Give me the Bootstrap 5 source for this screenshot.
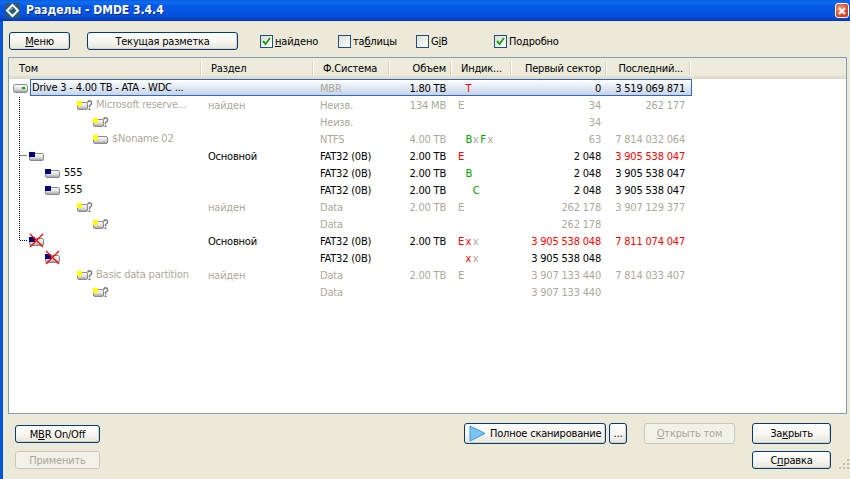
<!DOCTYPE html>
<html lang="ru">
<head>
<meta charset="utf-8">
<title>Разделы - DMDE 3.4.4</title>
<link rel="stylesheet" href="https://cdn.jsdelivr.net/npm/bootstrap@5.3.0/dist/css/bootstrap.min.css">
<style>
html,body{height:479px;overflow:hidden}
body{background:#ece9d8;font-family:"DejaVu Sans Condensed","DejaVu Sans",sans-serif;font-size:11px;line-height:13px;color:#000;letter-spacing:-.2px}
.shell{height:479px;border-left:3px solid #0855dd}
.titlebar{height:21px;margin-left:-3px;padding:0 1px 0 5px;background:linear-gradient(180deg,#0a5ee0 0,#0f6cf0 12%,#0558e4 30%,#0553df 70%,#0443c8 92%,#0331a8 100%);color:#fff;font:bold 12px/21px "DejaVu Sans Condensed","DejaVu Sans",sans-serif;letter-spacing:0;text-shadow:1px 1px 0 #0a2a8a}
.titlegap{gap:6px}
.closebox{width:14px;height:15px;border:1px solid #fff;border-radius:3px;background:radial-gradient(circle at 35% 35%,#f09a80,#d5411f 70%)}
.toolrow{height:36px;padding:11px 0 0 6px}
.xpbtn{height:18px;padding:0;font-size:11px;line-height:15px;letter-spacing:-.2px;white-space:nowrap;color:#000;border:1px solid #003c74;border-radius:3px;background:linear-gradient(180deg,#fff 0,#f6f5ef 55%,#e8e5d8 100%);box-shadow:inset -1px -1px 0 #d6d2c4}
.xpbtn.tall{height:21px;line-height:18px}
.xpbtn.disabled,.xpbtn:disabled{color:#aca899;border-color:#c9c7ba;background:#f2f1e8;box-shadow:none;opacity:1}
.w61{width:61px}.w151{width:151px}.w85{width:85px}.w142{width:142px}.w18{width:18px}.w91{width:91px}.w79{width:79px}
.mb0gap{margin-left:17px}
.tick{display:flex;align-items:center;gap:2px;height:18px;white-space:nowrap}
.tickbox{width:13px;height:13px;border:1px solid #1c5180;background:linear-gradient(135deg,#dcdcd7,#fff);display:block;flex:none}
.t1{margin-left:22px;width:78px}.t2{width:78px}.t3{width:78px}.t4{width:auto}
.listbox{height:357px;margin:0 0 0 5px;width:839px;border:1px solid #7f9db9;background:#fff;position:relative;overflow:hidden;padding-left:1px}
.gridrow{display:grid;grid-template-columns:192px 112px 76px 62px 60px 95px 84px;width:681px;white-space:nowrap}
.headrow{width:calc(100% + 1px);margin-left:-1px;padding-left:1px;height:21px;background:linear-gradient(180deg,#ebeadb 0,#ebeadb 80%,#d9d6c6 100%);line-height:22px}
.headrow>div{padding:0 6px 0 9px;position:relative}
.headrow>div::after{content:"";position:absolute;right:0;top:4px;height:13px;width:2px;background:#d6d2c2;border-right:1px solid #fff}
.headrow>.lasthead{padding-right:8px}
.datarow{height:17px;line-height:19px;position:relative}
.datarow>div{padding:0 6px;position:relative;min-width:0}
.selrow::before{content:"";position:absolute;left:20px;right:-1px;top:0;height:17px;border:1px solid #3169b5;background:linear-gradient(180deg,#fff 0,#c5d3ea 100%)}
.namecell{display:flex;align-items:center;gap:4px;padding:0!important;height:17px}
.ind3{padding-left:3px!important}.ind19{padding-left:19px!important}.ind35{padding-left:35px!important}.ind67{padding-left:67px!important}.ind83{padding-left:83px!important}
.volicon{display:block;flex:none;width:15px;height:11px;overflow:visible}
.mute{color:#aca899}
.hot{color:#f00}
.go{color:#00a000}
.flags{display:flex}
.flags span{display:block;width:7.4px;flex:none}
.treelines{position:absolute;left:0;top:0;pointer-events:none}
.footerzone{padding:9px 19px 0 12px}
.stack8{gap:8px}.stack7{gap:7px}
.topnudge{margin-top:2px}
.midgap{margin-left:17px;margin-right:17px}
.dotsgap{margin-left:3px}
.openbtn{margin-left:17px}
.scanicon{width:17px;height:17px;flex:none}
.grip{position:absolute;right:0;bottom:0}
.rel{position:relative}
</style>
</head>
<body>
<svg width="0" height="0" class="d-block" aria-hidden="true"><defs>
<linearGradient id="vg" x1="0" y1="0" x2="0" y2="1"><stop offset="0" stop-color="#fff"/><stop offset=".55" stop-color="#dedede"/><stop offset="1" stop-color="#9c9c9c"/></linearGradient>
<symbol id="blue" viewBox="0 0 15 11" overflow="visible"><rect x=".5" y="3.5" width="14" height="7" rx="1.5" fill="url(#vg)" stroke="#8a8a8a"/><rect x="0" y="2" width="6" height="5" fill="#000080"/></symbol>
<symbol id="yel" viewBox="0 0 15 11" overflow="visible"><rect x=".5" y="3.5" width="14" height="7" rx="1.5" fill="url(#vg)" stroke="#8a8a8a"/><rect x="0" y="2" width="5" height="5" fill="#ff0"/></symbol>
<symbol id="unk" viewBox="0 0 15 11" overflow="visible"><rect x=".5" y="3.5" width="10" height="7" rx="1.5" fill="url(#vg)" stroke="#8a8a8a"/><rect x="0" y="2" width="5" height="5" fill="#ff0"/><path d="M10.5 3.5 11.5 2h2l1 1v2l-2 1.5v2" fill="none" stroke="#777" stroke-width="1.4"/><rect x="11.5" y="9.5" width="2" height="1.6" fill="#777"/></symbol>
<symbol id="dead" viewBox="0 0 15 11" overflow="visible"><rect x=".5" y="3.5" width="14" height="7" rx="1.5" fill="url(#vg)" stroke="#8a8a8a"/><rect x="0" y="2" width="6" height="5" fill="#000080"/><path d="M1-1 14 12M14-1 1 12" stroke="#f00" stroke-width="1.3"/></symbol>
</defs></svg>
<div class="shell d-flex flex-column rel">
  <div class="titlebar d-flex align-items-center justify-content-between">
    <div class="d-flex align-items-center titlegap">
      <svg width="15" height="15" viewBox="0 0 15 15"><rect width="15" height="15" fill="#2b5a78"/><path d="M7.5 2 13 7.5 7.5 13 2 7.5Z" fill="none" stroke="#fff" stroke-width="2"/><path d="M5 7.5 7.5 5" stroke="#9fd" stroke-width="1"/></svg>
      <span>Разделы - DMDE 3.4.4</span>
    </div>
    <div class="closebox d-flex align-items-center justify-content-center"><svg width="8" height="8" viewBox="0 0 8 8"><path d="M1 1 7 7M7 1 1 7" stroke="#fff" stroke-width="2"/></svg></div>
  </div>
  <div class="toolrow d-flex align-items-start">
    <button class="btn xpbtn w61" type="button"><u>М</u>еню</button>
    <button class="btn xpbtn w151 mb0gap" type="button">Текущая разметка</button>
    <label class="tick t1"><span class="tickbox"><svg width="11" height="11" viewBox="0 0 11 11" class="d-block"><path d="M2 5 4.5 8 9 2" fill="none" stroke="#21a121" stroke-width="2"/></svg></span><span><u>н</u>айдено</span></label>
    <label class="tick t2"><span class="tickbox"></span><span>та<u>б</u>лицы</span></label>
    <label class="tick t3"><span class="tickbox"></span><span>G<u>i</u>B</span></label>
    <label class="tick t4"><span class="tickbox"><svg width="11" height="11" viewBox="0 0 11 11" class="d-block"><path d="M2 5 4.5 8 9 2" fill="none" stroke="#21a121" stroke-width="2"/></svg></span><span>Подробно</span></label>
  </div>
  <div class="listbox">
    <div class="gridrow headrow">
      <div>Том</div><div>Раздел</div><div>Ф.Система</div><div class="text-end">Объем</div><div>Индик...</div><div class="text-end">Первый сектор</div><div class="text-end lasthead">Последний...</div>
    </div>
    <div class="gridrow datarow selrow">
      <div class="namecell ind3"><svg class="volicon" viewBox="0 0 15 11"><rect x=".5" y="2.5" width="14" height="8" rx="2" fill="url(#vg)" stroke="#8a8a8a"/><rect x="9" y="5" width="3" height="2" fill="#0a0"/></svg><span>Drive 3 - 4.00 TB - ATA - WDC ...</span></div>
      <div></div><div class="mute">MBR</div><div class="text-end">1.80 TB</div><div><div class="flags"><span></span><span class="hot">T</span></div></div><div class="text-end">0</div><div class="text-end">3 519 069 871</div>
    </div>
    <div class="gridrow datarow mute">
      <div class="namecell ind67"><svg class="volicon"><use href="#unk"/></svg><span>Microsoft reserve...</span></div>
      <div>найден</div><div>Неизв.</div><div class="text-end">134 MB</div><div><div class="flags"><span>E</span></div></div><div class="text-end">34</div><div class="text-end">262 177</div>
    </div>
    <div class="gridrow datarow mute">
      <div class="namecell ind83"><svg class="volicon"><use href="#unk"/></svg></div>
      <div></div><div>Неизв.</div><div></div><div></div><div class="text-end">34</div><div></div>
    </div>
    <div class="gridrow datarow mute">
      <div class="namecell ind83"><svg class="volicon"><use href="#yel"/></svg><span>$Noname 02</span></div>
      <div></div><div>NTFS</div><div class="text-end">4.00 TB</div><div><div class="flags"><span></span><span class="go">B</span><span>x</span><span class="go">F</span><span>x</span></div></div><div class="text-end">63</div><div class="text-end">7 814 032 064</div>
    </div>
    <div class="gridrow datarow">
      <div class="namecell ind19"><svg class="volicon"><use href="#blue"/></svg></div>
      <div>Основной</div><div>FAT32 (0B)</div><div class="text-end">2.00 TB</div><div><div class="flags"><span class="hot">E</span></div></div><div class="text-end">2 048</div><div class="text-end hot">3 905 538 047</div>
    </div>
    <div class="gridrow datarow">
      <div class="namecell ind35"><svg class="volicon"><use href="#blue"/></svg><span>555</span></div>
      <div></div><div>FAT32 (0B)</div><div class="text-end">2.00 TB</div><div><div class="flags"><span></span><span class="go">B</span></div></div><div class="text-end">2 048</div><div class="text-end">3 905 538 047</div>
    </div>
    <div class="gridrow datarow">
      <div class="namecell ind35"><svg class="volicon"><use href="#blue"/></svg><span>555</span></div>
      <div></div><div>FAT32 (0B)</div><div class="text-end">2.00 TB</div><div><div class="flags"><span></span><span></span><span class="go">C</span></div></div><div class="text-end">2 048</div><div class="text-end">3 905 538 047</div>
    </div>
    <div class="gridrow datarow mute">
      <div class="namecell ind67"><svg class="volicon"><use href="#unk"/></svg></div>
      <div>найден</div><div>Data</div><div class="text-end">2.00 TB</div><div><div class="flags"><span>E</span></div></div><div class="text-end">262 178</div><div class="text-end">3 907 129 377</div>
    </div>
    <div class="gridrow datarow mute">
      <div class="namecell ind83"><svg class="volicon"><use href="#unk"/></svg></div>
      <div></div><div>Data</div><div></div><div></div><div class="text-end">262 178</div><div></div>
    </div>
    <div class="gridrow datarow">
      <div class="namecell ind19"><svg class="volicon"><use href="#dead"/></svg></div>
      <div>Основной</div><div>FAT32 (0B)</div><div class="text-end">2.00 TB</div><div><div class="flags"><span class="hot">E</span><span class="hot">x</span><span class="mute">x</span></div></div><div class="text-end hot">3 905 538 048</div><div class="text-end hot">7 811 074 047</div>
    </div>
    <div class="gridrow datarow">
      <div class="namecell ind35"><svg class="volicon"><use href="#dead"/></svg></div>
      <div></div><div>FAT32 (0B)</div><div></div><div><div class="flags"><span></span><span class="hot">x</span><span class="mute">x</span></div></div><div class="text-end">3 905 538 048</div><div></div>
    </div>
    <div class="gridrow datarow mute">
      <div class="namecell ind67"><svg class="volicon"><use href="#unk"/></svg><span>Basic data partition</span></div>
      <div>найден</div><div>Data</div><div class="text-end">2.00 TB</div><div><div class="flags"><span>E</span></div></div><div class="text-end">3 907 133 440</div><div class="text-end">7 814 033 407</div>
    </div>
    <div class="gridrow datarow mute">
      <div class="namecell ind83"><svg class="volicon"><use href="#unk"/></svg></div>
      <div></div><div>Data</div><div></div><div></div><div class="text-end">3 907 133 440</div><div></div>
    </div>
    <svg class="treelines" width="120" height="260" viewBox="0 0 120 260" aria-hidden="true">
      <path d="M10.5 39V182.5H18M10.5 97.5H18" fill="none" stroke="#000" stroke-dasharray="1 1"/>
    </svg>
  </div>
  <div class="footerzone d-flex rel">
    <div class="d-flex flex-column stack8">
      <button class="btn xpbtn w85 topnudge" type="button">M<u>B</u>R On/Off</button>
      <button class="btn xpbtn w85 disabled" type="button">Применить</button>
    </div>
    <div class="d-flex align-items-start ms-auto midgap">
      <button class="btn xpbtn tall w142 d-flex align-items-center" type="button"><svg class="scanicon ms-1" viewBox="0 0 17 17"><path d="M1 1 16 8.5 1 16Z" fill="#7cc4f0" stroke="#3a96dd"/></svg><span class="ms-1">Полное сканирование</span></button>
      <button class="btn xpbtn tall w18 dotsgap" type="button">...</button>
      <button class="btn xpbtn tall w91 disabled openbtn" type="button"><u>О</u>ткрыть том</button>
    </div>
    <div class="d-flex flex-column stack7">
      <button class="btn xpbtn tall w79" type="button">За<u>к</u>рыть</button>
      <button class="btn xpbtn w79" type="button">С<u>п</u>равка</button>
    </div>
    <svg class="grip" width="11" height="11" viewBox="0 0 11 11" aria-hidden="true"><g fill="#c2bfae"><rect x="8" y="1" width="2" height="2"/><rect x="4" y="5" width="2" height="2"/><rect x="8" y="5" width="2" height="2"/><rect x="0" y="9" width="2" height="2"/><rect x="4" y="9" width="2" height="2"/><rect x="8" y="9" width="2" height="2"/></g></svg>
  </div>
</div>
<script src="https://cdn.jsdelivr.net/npm/bootstrap@5.3.0/dist/js/bootstrap.bundle.min.js"></script>
</body>
</html>
